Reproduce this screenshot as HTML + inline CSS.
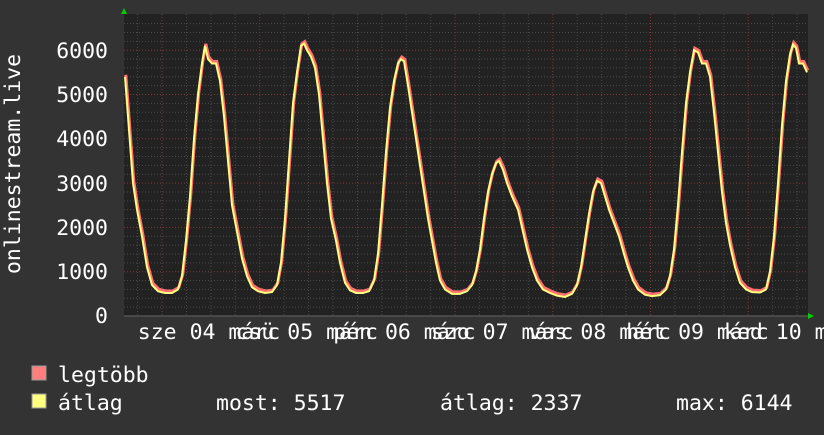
<!DOCTYPE html><html><head><meta charset="utf-8"><style>
body{margin:0;background:#333;width:824px;height:430px;overflow:hidden}
svg text{font-family:"DejaVu Sans Mono","Liberation Mono",monospace;fill:#fff;font-size:21.5px}
</style></head><body>
<svg width="824" height="430" xmlns="http://www.w3.org/2000/svg">
<rect width="824" height="430" fill="#333"/>
<rect x="124" y="14" width="684" height="302" fill="#222"/>
<g id="grid"></g>
<g fill="none" transform="translate(0,316) scale(1,-0.0443)">
<polyline id="r" stroke="#ff6f6f" stroke-width="3" vector-effect="non-scaling-stroke" transform="translate(0.8,45)"/>
<polyline id="y" stroke="#ffff80" stroke-width="2" vector-effect="non-scaling-stroke"/>
</g>
<polygon points="121,14 127,14 124,8" fill="#0c0"/>
<polygon points="808,313 808,319 814,316" fill="#0c0"/>
<g text-anchor="end">
<text x="108" y="58">6000</text><text x="108" y="102">5000</text><text x="108" y="146">4000</text>
<text x="108" y="191">3000</text><text x="108" y="235">2000</text><text x="108" y="279">1000</text><text x="108" y="323">0</text>
</g>
<text transform="translate(20,164) rotate(-90)" text-anchor="middle">onlinestream.live</text>
<g text-anchor="middle" id="xl"></g>
<rect x="32" y="366" width="14" height="14" fill="#ff7f7f" stroke="#999"/>
<rect x="32" y="394" width="14" height="14" fill="#ffff80" stroke="#999"/>
<text x="58" y="382">legtöbb</text>
<text x="58" y="410">átlag</text>
<text x="216" y="410">most: 5517</text>
<text x="440" y="410">átlag: 2337</text>
<text x="676" y="410">max: 6144</text>
</svg>
<script>
var NS="http://www.w3.org/2000/svg";
function el(n,a,p){var e=document.createElementNS(NS,n);for(var k in a)e.setAttribute(k,a[k]);document.getElementById(p).appendChild(e);return e;}
for(var v=0;v<=6600;v+=200){var y=316-v*0.0443;if(y<14)break;var maj=v%1000==0;
el("line",{x1:124,x2:808,y1:y,y2:y,stroke:maj?"#7a3a3a":"#4a4a4a","stroke-dasharray":"1,2"},"grid");}
for(var x=162-97.7*1.5;x<808;x+=24.425){if(x<124)continue;var d=Math.abs(((x-162)/97.7)-Math.round((x-162)/97.7))<0.01;
el("line",{x1:x,x2:x,y1:14,y2:316,stroke:d?"#7a3a3a":"#4a4a4a","stroke-dasharray":"1,2"},"grid");}
el("line",{x1:124,x2:808,y1:316,y2:316,stroke:"#666"},"grid");
var labs=["sze 04 márc","csü 05 márc","pén 06 márc","szo 07 márc","vas 08 márc","hét 09 márc","ked 10 márc"];
for(var i=0;i<7;i++){var t=el("text",{x:162+97.7*i+49-2,y:339},"xl");t.textContent=labs[i];}
var p="125 5400,128 4500,133 3000,137 2400,142 1800,147 1100,152 700,158 560,165 520,172 520,178 600,182 900,186 1700,190 2700,194 4000,198 5000,202 5700,205 6100,208 5800,212 5700,216 5700,220 5300,224 4500,228 3500,232 2500,237 1900,242 1300,247 900,252 650,258 560,265 520,272 540,277 700,281 1200,285 2200,289 3500,293 4800,297 5500,301 6100,304 6150,307 6000,311 5850,315 5600,319 5000,323 4000,327 3000,331 2200,336 1700,340 1200,345 750,350 580,356 520,363 520,369 560,374 800,378 1400,382 2500,386 3700,390 4700,394 5300,398 5700,401 5800,404 5750,408 5200,412 4600,416 4000,420 3400,424 2800,428 2200,432 1700,436 1200,440 800,445 600,452 500,460 500,467 560,472 700,476 1000,480 1500,484 2200,488 2800,492 3200,496 3450,499 3500,503 3300,507 3000,512 2700,518 2400,522 2000,527 1500,532 1100,537 800,543 600,550 520,557 460,565 430,572 500,577 700,581 1100,585 1700,589 2300,593 2800,597 3050,601 3000,605 2700,609 2400,614 2100,619 1800,624 1400,628 1100,633 800,638 600,645 480,652 450,660 470,666 600,670 900,674 1500,678 2500,682 3700,686 4800,690 5500,694 6000,698 5950,702 5700,706 5700,710 5400,714 4600,718 3700,722 2800,726 2100,730 1600,735 1100,740 750,746 600,752 540,760 530,766 600,770 1000,774 1800,778 3000,782 4300,786 5300,790 5900,793 6130,796 6050,799 5700,803 5700,807 5500";
document.getElementById("r").setAttribute("points",p);
document.getElementById("y").setAttribute("points",p);
</script>
</body></html>
